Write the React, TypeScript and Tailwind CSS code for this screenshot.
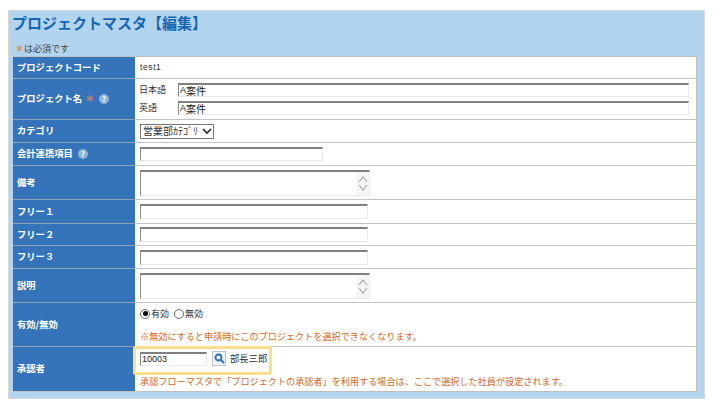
function Help() {
  return (
    <span className="ml-[5px] inline-flex h-[10px] w-[10px] items-center justify-center rounded-full bg-[#8fb4de] text-[8px] font-bold leading-none text-white">?</span>
  );
}
function Star() {
  return <span className="inline-block w-[9px] text-center font-bold text-[#e8883a]">＊</span>;
}
function Row({ h, label, children, last }: { h: string; label: React.ReactNode; children: React.ReactNode; last?: boolean }) {
  return (
    <div className={`flex ${h} ${last ? "" : "border-b border-[#c4c4c4]"}`}>
      <div className={`flex w-[122px] shrink-0 items-center bg-[#3574bb] pl-[4px] text-[9.3px] font-bold text-white ${last ? "" : "-mb-px border-b border-[#8ea3b8]"}`}>{label}</div>
      <div className="flex min-w-0 flex-1 flex-col justify-center bg-white pl-[5px] text-[9px] text-[#333333]">{children}</div>
    </div>
  );
}
function Field({ w, h = "h-[14px]", value }: { w: string; h?: string; value?: React.ReactNode }) {
  return (
    <div className={`flex items-center border-b border-l border-r border-t-2 border-b-[#e8e8e8] border-l-[#8a8a8a] border-r-[#e8e8e8] border-t-[#808080] bg-white pl-[1px] text-[10px] leading-none text-[#222222] ${h} ${w}`}>{value}</div>
  );
}
function Area() {
  return (
    <div className="flex h-[26px] w-[230px] justify-end border-b border-l border-r border-t-2 border-b-[#e8e8e8] border-l-[#8a8a8a] border-r-[#e8e8e8] border-t-[#808080] bg-white">
      <div className="flex w-[13px] flex-col items-center justify-center gap-[1px] bg-[#f6f6f6]">
        <svg width="10" height="7" viewBox="0 0 10 7" fill="none" stroke="#a8a8a8" strokeWidth="1.2"><path d="M1 6l4-5 4 5" /></svg>
        <svg width="10" height="7" viewBox="0 0 10 7" fill="none" stroke="#a8a8a8" strokeWidth="1.2"><path d="M1 1l4 5 4-5" /></svg>
      </div>
    </div>
  );
}
function Radio({ on }: { on?: boolean }) {
  return (
    <span className="inline-flex h-[10px] w-[10px] items-center justify-center rounded-full border border-[#666666] bg-white">
      {on && <span className="h-[5px] w-[5px] rounded-full bg-black" />}
    </span>
  );
}
function Half({ children }: { children: React.ReactNode }) {
  return <span className="font-['Liberation_Sans',sans-serif] text-[9px]">{children}</span>;
}
export default function App() {
  return (
    <div className="h-[406px] w-[714px] bg-white pl-[8px] pt-[10px] font-['Noto_Sans_CJK_JP','Liberation_Sans',sans-serif]">
      <div className="h-[389px] w-[697px] border border-[#d8d8d8] bg-[#b3d4ef] pl-[4px] pt-[1px]">
        <h1 className="-ml-[1px] h-[26px] text-[15px] font-bold leading-[21px] text-[#1666b2]">プロジェクトマスタ【編集】</h1>
        <p className="flex h-[18px] items-end pb-[1px] pl-[2px] text-[9px] leading-[13px] text-[#444444]"><Star />は必須です</p>
        <div className="w-[684px] border-b border-r border-t border-[#c0c0c0] bg-white">
          <Row h="h-[22px]" label="プロジェクトコード"><span className="font-['Liberation_Sans',sans-serif] text-[8.5px] tracking-[0.6px]">test1</span></Row>
          <Row h="h-[41px]" label={<span className="flex items-center">プロジェクト名<span className="ml-[3px]"><Star /></span><Help /></span>}>
            <div className="flex h-[18px] items-center"><span className="-ml-[1px] w-[39px]">日本語</span><Field w="w-[511px]" value={<><Half>A</Half>案件</>} /></div>
            <div className="flex h-[18px] items-center"><span className="-ml-[1px] w-[39px]">英語</span><Field w="w-[511px]" value={<><Half>A</Half>案件</>} /></div>
          </Row>
          <Row h="h-[23px]" label="カテゴリ">
            <div className="flex h-[15px] w-[74px] items-center justify-between border border-[#767676] bg-white pl-[2px] pr-[1px] text-[10px] leading-none">
              <span className="whitespace-nowrap">営業部ｶﾃｺﾞﾘ</span>
              <svg width="10" height="7" viewBox="0 0 10 7" fill="none" stroke="#222222" strokeWidth="1.6"><path d="M1 1l4 4 4-4" /></svg>
            </div>
          </Row>
          <Row h="h-[23px]" label={<span className="flex items-center">会計連携項目<Help /></span>}><Field w="w-[183px]" /></Row>
          <Row h="h-[34px]" label="備考"><Area /></Row>
          <Row h="h-[24px]" label="フリー１"><Field w="w-[228px]" h="h-[15px]" /></Row>
          <Row h="h-[22px]" label="フリー２"><Field w="w-[228px]" h="h-[15px]" /></Row>
          <Row h="h-[23px]" label="フリー３"><Field w="w-[228px]" h="h-[15px]" /></Row>
          <Row h="h-[34px]" label="説明"><Area /></Row>
          <Row h="h-[44px]" label="有効/無効">
            <div className="flex h-[34px] flex-col justify-between">
              <div className="flex items-center leading-[12px]"><Radio on /><span className="ml-[1px]">有効</span><span className="ml-[5px] flex items-center"><Radio /></span><span className="ml-[1px]">無効</span></div>
              <div className="text-[9.13px] leading-[12px] text-[#d2691e]">※無効にすると申請時にこのプロジェクトを選択できなくなります。</div>
            </div>
          </Row>
          <Row h="h-[44px]" last label="承認者">
            <div className="flex h-[35px] flex-col justify-between">
              <div className="flex h-[14px] items-center">
                <Field w="w-[67px]" value={<Half>10003</Half>} />
                <span className="ml-[5px] flex h-[15px] w-[14px] items-center justify-center border border-[#b8c4d0] bg-[#eef2f6]">
                  <svg width="11" height="11" viewBox="0 0 11 11" fill="none" stroke="#2a6db5" strokeWidth="1.8"><circle cx="4.5" cy="4.5" r="3" /><path d="M7 7l3 3" /></svg>
                </span>
                <span className="ml-[4px] text-[9.3px]">部長三郎</span>
              </div>
              <div className="text-[9.13px] leading-[12px] text-[#d2691e]">承認フローマスタで「プロジェクトの承認者」を利用する場合は、ここで選択した社員が設定されます。</div>
            </div>
            <div className="pointer-events-none absolute left-[133px] top-[346px] h-[29px] w-[139px] rounded-[2px] border-[3px] border-[#fbdf8c]" />
          </Row>
        </div>
      </div>
    </div>
  );
}
